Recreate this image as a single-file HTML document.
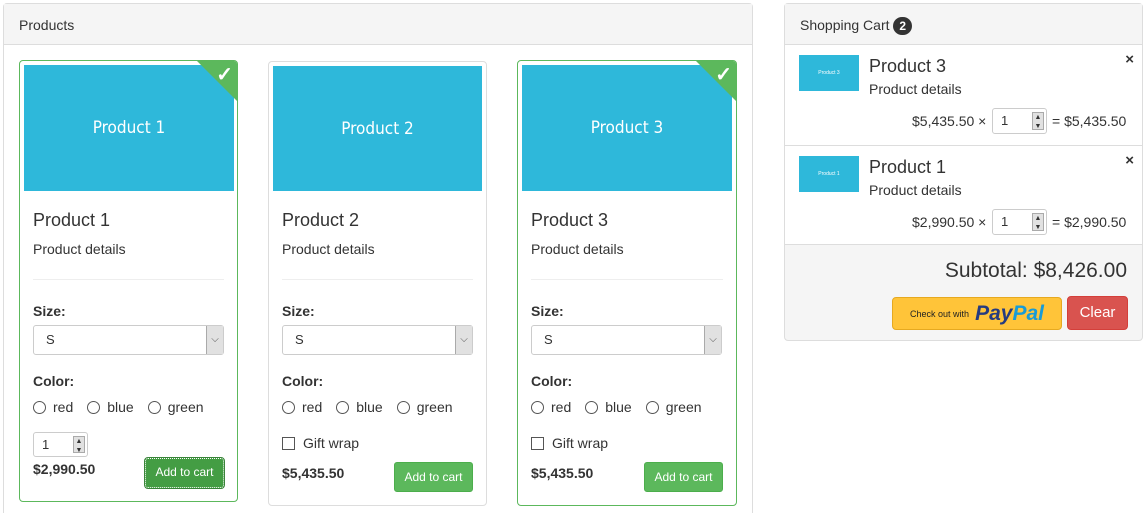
<!DOCTYPE html>
<html><head><style>
*{box-sizing:border-box;margin:0;padding:0}
html,body{width:1148px;height:513px;overflow:hidden}
body{background:#fff;font-family:"Liberation Sans",sans-serif;color:#333;font-size:14px;position:relative}
.abs{position:absolute}
.panel{position:absolute;border:1px solid #ddd;border-radius:4px;background:#fff}
.ph{background:#f5f5f5;border-bottom:1px solid #ddd;height:41px;padding:13px 15px;font-size:14px}
.card{position:absolute;border:1px solid #ddd;border-radius:4px;background:#fff;overflow:hidden}
.card.sel{border-color:#5cb85c}
.img{position:absolute;left:4px;top:4px;width:210px;height:126px;background:#2eb8da;color:#fff;text-align:center;line-height:126px;font-size:17px;font-family:"DejaVu Sans Condensed","Liberation Sans Narrow",sans-serif}
.corner{position:absolute;right:0;top:0;width:0;height:0;border-top:40px solid #5cb85c;border-left:40px solid transparent}
.ck{position:absolute;right:4px;top:1px;color:#fff;font-size:20px;font-weight:bold}
.t{position:absolute;left:13px;font-size:18px;top:149px}
.d{position:absolute;left:13px;top:180px}
.hr{position:absolute;left:13px;right:13px;top:218px;border-top:1px solid #eee}
.lb{position:absolute;left:13px;font-weight:bold}
.sel2{position:absolute;left:13px;width:191px;height:30px;top:264px;border:1px solid #ccc;border-radius:3px;padding:6px 12px;font-size:13px}
.sel2 .ar{position:absolute;right:0;top:0;width:17px;height:28px;background:#e1e1e1;border-left:1px solid #aaa;font-size:10px;text-align:center;line-height:28px;color:#555}
.rad{position:absolute;left:13px;top:338px;display:flex;align-items:center}
.rad i{display:inline-block;width:13px;height:13px;border:1px solid #555;border-radius:50%;margin-right:7px}
.rad span{margin-right:14px}
.btn{position:absolute;background:#5cb85c;border:1px solid #4cae4c;color:#fff;font-size:12px;border-radius:3px;text-align:center}
.num{position:absolute;border:1px solid #ccc;border-radius:3px;background:#fff;font-size:13px;padding-left:8px}
.num .sp{position:absolute;right:2px;top:3px;width:12px;bottom:3px;background:#e1e1e1;border:1px solid #aaa;font-size:7px;line-height:9px;text-align:center}
.ci{position:absolute;left:0;right:0;height:100px;border-top:1px solid #ddd}
</style></head><body>
<div class="panel" style="left:3px;top:3px;width:750px;height:510px;border-bottom:none;border-radius:4px 4px 0 0">
<div class="ph">Products</div></div>

<div class="card sel" style="left:19px;top:60px;width:219px;height:442px">
<div class="img">Product 1</div><div class="corner"></div><div class="ck">✓</div>
<div class="t">Product 1</div><div class="d">Product details</div><div class="hr"></div>
<div class="lb" style="top:242px">Size:</div>
<div class="sel2">S<div class="ar">⌵</div></div>
<div class="lb" style="top:312px">Color:</div>
<div class="rad"><i></i><span>red</span><i></i><span>blue</span><i></i><span>green</span></div>
<div class="num" style="left:13px;top:371px;width:55px;height:25px;line-height:23px">1<div class="sp">▲<br>▼</div></div>
<div class="lb" style="top:400px">$2,990.50</div>
<div class="btn" style="left:125px;top:397px;width:79px;height:30px;line-height:27px;background:#449d44;border:1px dotted #fff;outline:1px solid #398439">Add to cart</div>
</div>

<div class="card" style="left:268px;top:61px;width:219px;height:445px">
<div class="img" style="width:209px;height:125px">Product 2</div>
<div class="t" style="top:148px">Product 2</div><div class="d" style="top:179px">Product details</div><div class="hr" style="top:217px"></div>
<div class="lb" style="top:241px">Size:</div>
<div class="sel2" style="top:263px">S<div class="ar">⌵</div></div>
<div class="lb" style="top:311px">Color:</div>
<div class="rad" style="top:337px"><i></i><span>red</span><i></i><span>blue</span><i></i><span>green</span></div>
<div class="abs" style="left:13px;top:373px;display:flex;align-items:center"><i style="display:inline-block;width:13px;height:13px;border:1px solid #555;margin-right:8px"></i>Gift wrap</div>
<div class="lb" style="top:403px">$5,435.50</div>
<div class="btn" style="left:125px;top:400px;width:79px;height:30px;line-height:28px">Add to cart</div>
</div>

<div class="card sel" style="left:517px;top:60px;width:220px;height:446px">
<div class="img">Product 3</div><div class="corner"></div><div class="ck">✓</div>
<div class="t">Product 3</div><div class="d">Product details</div><div class="hr"></div>
<div class="lb" style="top:242px">Size:</div>
<div class="sel2">S<div class="ar">⌵</div></div>
<div class="lb" style="top:312px">Color:</div>
<div class="rad"><i></i><span>red</span><i></i><span>blue</span><i></i><span>green</span></div>
<div class="abs" style="left:13px;top:374px;display:flex;align-items:center"><i style="display:inline-block;width:13px;height:13px;border:1px solid #555;margin-right:8px"></i>Gift wrap</div>
<div class="lb" style="top:404px">$5,435.50</div>
<div class="btn" style="left:126px;top:401px;width:79px;height:30px;line-height:28px">Add to cart</div>
</div>

<div class="panel" style="left:784px;top:3px;width:359px;height:338px;background:#f5f5f5">
<div class="ph">Shopping Cart <span style="display:inline-block;background:#333;color:#fff;border-radius:10px;font-size:12px;font-weight:bold;padding:2px 6px;line-height:14px">2</span></div>
<div class="ci" style="top:41px;background:#fff;border-top:none">
<div class="abs" style="left:14px;top:10px;width:60px;height:36px;background:#2eb8da;color:#fff;font-size:5px;text-align:center;line-height:36px">Product 3</div>
<div class="abs" style="left:84px;top:11px;font-size:18px">Product 3</div>
<div class="abs" style="left:84px;top:36px">Product details</div>
<div class="abs" style="right:8px;top:6px;font-weight:bold;font-size:15px">×</div>
<div class="abs" style="left:127px;top:68px">$5,435.50 ×</div>
<div class="num" style="left:207px;top:63px;width:55px;height:26px;line-height:24px">1<div class="sp">▲<br>▼</div></div>
<div class="abs" style="left:267px;top:68px">= $5,435.50</div>
</div>
<div class="ci" style="top:141px;background:#fff;border-bottom:1px solid #ddd">
<div class="abs" style="left:14px;top:10px;width:60px;height:36px;background:#2eb8da;color:#fff;font-size:5px;text-align:center;line-height:36px">Product 1</div>
<div class="abs" style="left:84px;top:11px;font-size:18px">Product 1</div>
<div class="abs" style="left:84px;top:36px">Product details</div>
<div class="abs" style="right:8px;top:6px;font-weight:bold;font-size:15px">×</div>
<div class="abs" style="left:127px;top:68px">$2,990.50 ×</div>
<div class="num" style="left:207px;top:63px;width:55px;height:26px;line-height:24px">1<div class="sp">▲<br>▼</div></div>
<div class="abs" style="left:267px;top:68px">= $2,990.50</div>
</div>
<div class="abs" style="right:15px;top:255px;font-size:21px">Subtotal: $8,426.00</div>
<div class="abs" style="left:107px;top:293px;width:170px;height:33px;background:#ffc439;border:1px solid #e6a920;border-radius:4px;display:flex;align-items:center;justify-content:center">
<span style="font-size:9px;color:#222;margin-right:6px">Check out with</span><span style="font-size:21px;font-weight:bold;font-style:italic;color:#253b80">Pay</span><span style="font-size:21px;font-weight:bold;font-style:italic;color:#179bd7">Pal</span></div>
<div class="abs" style="left:282px;top:292px;width:61px;height:34px;background:#d9534f;border:1px solid #d43f3a;border-radius:4px;color:#fff;font-size:15px;text-align:center;line-height:32px">Clear</div>
</div>
</body></html>
